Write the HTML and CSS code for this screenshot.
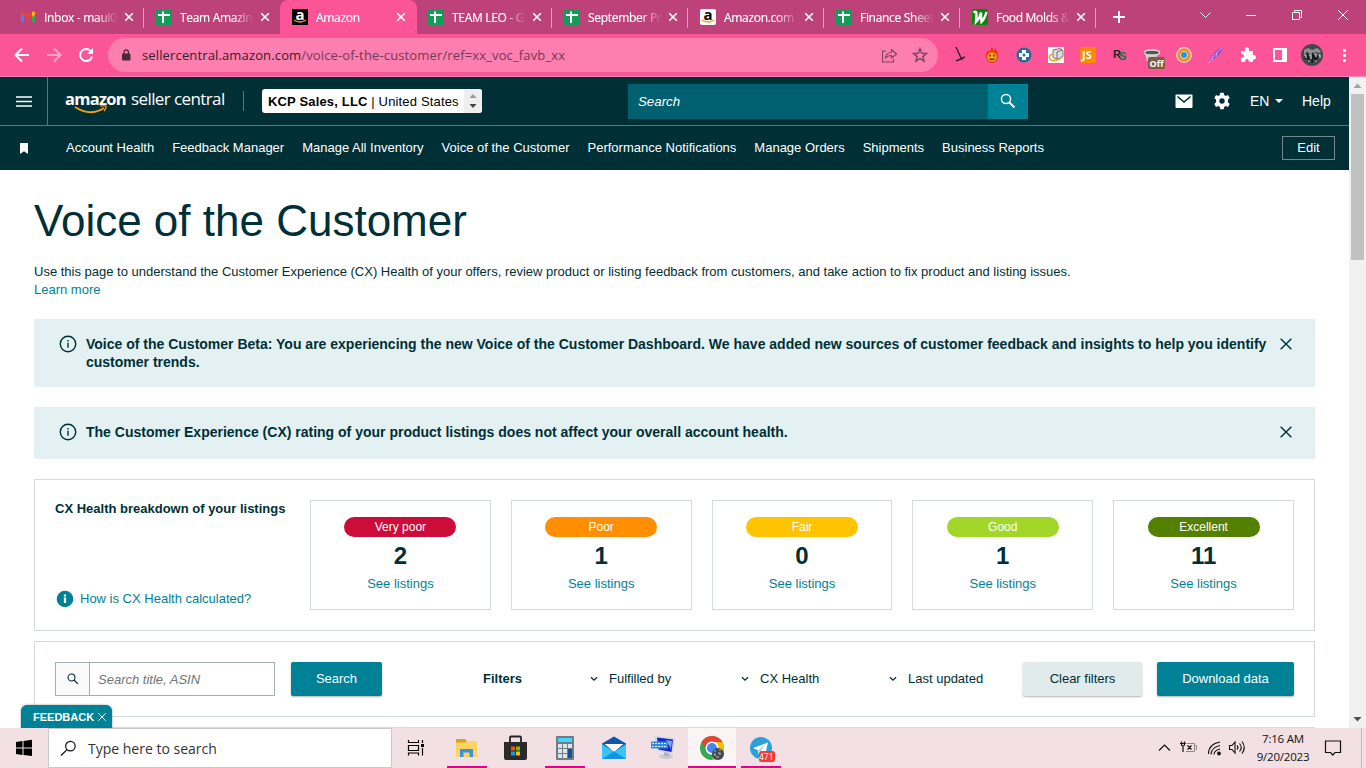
FILE: index.html
```
<!DOCTYPE html>
<html lang="en">
<head>
    <meta charset="UTF-8">
    <meta name="viewport" content="width=device-width, initial-scale=1.0">
    <title>Amazon</title>
    <link rel="stylesheet" href="styles.css">
</head>
<body>
    <svg class="defs" width="0" height="0">
        <symbol id="close" viewBox="0 0 10 10"><path d="M1.2 1.2l7.6 7.6M8.8 1.2L1.2 8.8" stroke="currentColor" fill="none"/></symbol>
        <symbol id="sheet" viewBox="0 0 16 16"><rect width="16" height="16" rx="1.5" fill="#0f9d58"/><path d="M2 6h12M7 2.500V14" stroke="#fff" stroke-width="2" fill="none"/></symbol>
        <symbol id="info" viewBox="0 0 18 18"><circle cx="9" cy="9" r="7.7" stroke="#002f36" stroke-width="1.4" fill="none"/><path d="M9 7.7v5M9 4.9v1.6" stroke="#002f36" stroke-width="1.4"/></symbol>
        <symbol id="chev" viewBox="0 0 8 6"><path d="M1 1.2l3 3 3-3" stroke="#002f36" stroke-width="1.3" fill="none"/></symbol>
        <symbol id="glass" viewBox="0 0 16 16"><circle cx="6" cy="6" r="4.6" stroke="currentColor" stroke-width="1.5" fill="none"/><path d="M9.5 9.5l5 5" stroke="currentColor" stroke-width="1.8"/></symbol>
    </svg>

    <!-- Browser tabs -->
    <div class="tabs">
        <div class="tab line">
            <svg class="fav" viewBox="0 0 16 16"><path d="M1 4v9.2h3V7z" fill="#4285f4"/><path d="M12 7v6.2h3V4z" fill="#34a853"/><path d="M1 4.2C1 2.4 3 2 4 3l4 3.2L12 3c1-1 3-.6 3 1.2L8 10z" fill="#ea4335"/><path d="M12 3c1-1 3-.6 3 1.2v1.6L12 8z" fill="#fbbc04"/></svg>
            <span class="tab-title">Inbox - maui01</span><svg class="tab-x"><use href="#close"/></svg>
        </div>
        <div class="tab"><svg class="fav"><use href="#sheet"/></svg><span class="tab-title">Team Amazing</span><svg class="tab-x"><use href="#close"/></svg></div>
        <div class="tab active"><span class="fav amz dark">a<svg viewBox="0 0 16 5"><path d="M2 1q6 4 12 0" stroke="#f90" stroke-width="1.3" fill="none"/></svg></span><span class="tab-title">Amazon</span><svg class="tab-x"><use href="#close"/></svg></div>
        <div class="tab line"><svg class="fav"><use href="#sheet"/></svg><span class="tab-title">TEAM LEO - G</span><svg class="tab-x"><use href="#close"/></svg></div>
        <div class="tab line"><svg class="fav"><use href="#sheet"/></svg><span class="tab-title">September Pr</span><svg class="tab-x"><use href="#close"/></svg></div>
        <div class="tab line"><span class="fav amz">a<svg viewBox="0 0 16 5"><path d="M2 1q6 4 12 0" stroke="#f90" stroke-width="1.5" fill="none"/></svg></span><span class="tab-title">Amazon.com</span><svg class="tab-x"><use href="#close"/></svg></div>
        <div class="tab line"><svg class="fav"><use href="#sheet"/></svg><span class="tab-title">Finance Sheet</span><svg class="tab-x"><use href="#close"/></svg></div>
        <div class="tab line"><svg class="fav" viewBox="0 0 16 16"><rect width="16" height="16" rx="2" fill="#0a870a"/><path d="M1.500 3.500q3-2 3 1.500 0 4-.5 8Q8 9 9 3.500q0 5 .5 9.500 3-3 5-10" stroke="#fff" stroke-width="2.400" fill="none"/></svg><span class="tab-title">Food Molds &amp;</span><svg class="tab-x"><use href="#close"/></svg></div>
        <svg class="plus" viewBox="0 0 12 12"><path d="M6 0v12M0 6h12" stroke="#fff" stroke-width="2"/></svg>
        <div class="win">
            <svg viewBox="0 0 46 28"><path d="M18.500 11.500l5 5 5-5" stroke="#fff" fill="none"/></svg>
            <svg viewBox="0 0 46 28"><path d="M18 14.500h10" stroke="#fff" fill="none"/></svg>
            <svg viewBox="0 0 46 28"><path d="M18.500 11.500h7v7h-7zM20.500 11.500v-2h7v7h-2" stroke="#fff" fill="none"/></svg>
            <svg viewBox="0 0 46 28"><path d="M18 9l10 10M28 9L18 19" stroke="#fff" fill="none"/></svg>
        </div>
    </div>

    <!-- Address bar -->
    <div class="toolbar">
        <svg class="navs" viewBox="0 0 108 42" fill="none" stroke-width="2">
            <path d="M29 21H16M22 14.500L15.500 21l6.500 6.500" stroke="#fff"/>
            <path d="M47 21h13M54 14.500l6.500 6.500-6.500 6.500" stroke="#fda3c6"/>
            <path d="M91 17.500A6 6 0 1 0 92 22.500" stroke="#fff"/><path d="M93 14v6h-6z" fill="#fff"/>
        </svg>
        <div class="omnibox">
            <svg class="lock" viewBox="0 0 10 12"><rect x="1" y="4.500" width="8.500" height="7" rx="1" fill="#4b2a39"/><path d="M3 5V3a2.200 2.200 0 0 1 4.400 0v2" stroke="#4b2a39" stroke-width="1.3" fill="none"/></svg>
            <span class="url">sellercentral.amazon.com<em>/voice-of-the-customer/ref=xx_voc_favb_xx</em></span>
            <svg class="omni-icons" viewBox="0 0 48 18" fill="none" stroke="#7e4560" stroke-width="1.2">
                <path d="M4 5H.5v11h11v-3M3.500 12c.5-4 3-5.500 6-5.500V3.500l5 4.500-5 4V9.500c-2.500 0-4.500.5-6 2.500z" stroke-linejoin="round"/>
                <path d="M38 2.800l1.800 4.400 4.700.3-3.600 3.100 1.200 4.600-4.100-2.600-4.100 2.600 1.200-4.600-3.600-3.100 4.700-.3z" stroke-width="1.500"/>
            </svg>
        </div>
        <div class="exts">
            <svg viewBox="0 0 32 32"><path d="M12 8l6 13M12 22l9-4" stroke="#33212b" stroke-width="1.400"/></svg>
            <svg viewBox="0 0 32 32"><path d="M16 8c1 2 1 3 2 4 1-1 0-2 1-3 1 2 3 4 3 8 0 4-3 7-6 7s-6-3-6-7c0-3 2-4 2-6l2 2c1-2 0-3 2-5z" fill="#e8370d"/><circle cx="16" cy="18" r="4.800" fill="#f9a11b"/><path d="M13.500 19.500q2.500 2.500 5 0M14 15.500v2M18 15.500v2" stroke="#5a2106" stroke-width="1.200" fill="none"/></svg>
            <svg viewBox="0 0 32 32"><circle cx="16" cy="16" r="7.500" fill="#276b9c"/><path d="M16 11v10M11 16h10" stroke="#fff" stroke-width="4"/><circle cx="16" cy="16" r="1.500" fill="#276b9c"/></svg>
            <svg viewBox="0 0 32 32"><rect x="8" y="8" width="16" height="16" fill="#fff"/><path d="M13 11l7-1.500 3 2v6l-6 3-4-2z" fill="#ddd" stroke="#555" stroke-width=".8"/><path d="M17 20v-7l5-2" stroke="#555" stroke-width=".8" fill="none"/><path d="M12 15q-5 3-1 6 6 2 11-3" stroke="#f6a020" stroke-width="1.500" fill="none"/></svg>
            <svg viewBox="0 0 32 32"><rect x="8" y="8" width="16" height="16" rx="1.500" fill="#ff8a00"/><text x="10" y="20" class="i-js">JS</text></svg>
            <svg viewBox="0 0 32 32"><text x="9" y="19" class="i-rs">R</text><text x="15" y="21" class="i-rs g">S</text></svg>
            <svg viewBox="0 0 32 32"><path d="M9 14l2 8h9l2-8z" fill="#ccc"/><ellipse cx="16" cy="13.500" rx="7.500" ry="2.500" fill="#555" stroke="#ddd" stroke-width="1.300"/><rect x="12" y="18" width="17" height="12" rx="2" fill="#7d5c43"/><text x="13.500" y="28" class="i-off">Off</text></svg>
            <svg viewBox="0 0 32 32"><circle cx="16" cy="16" r="7.300" fill="#ef8d29" stroke="#ead9c8" stroke-width="1.300"/><circle cx="16" cy="16" r="3.600" fill="#219bd8" stroke="#f6d7b8"/></svg>
            <svg viewBox="0 0 32 32"><path d="M9 24C10 17 16 11 23 8c-1 5-5 10-13 14z" fill="#8551cf"/><path d="M9 24C12 18 16 14 22 9M13 17l-1 4M17 13l-1 5" stroke="#db9aee" fill="none"/></svg>
            <svg viewBox="0 0 32 32"><path d="M9 12h4c-1-5 5-5 4 0h4v4c4-1 4 5 0 4.500V23h-4c0-4-4-4-4 0H9v-4c4 0 4-4 0-4z" fill="#fff"/></svg>
            <svg viewBox="0 0 32 32"><path d="M10 10h12v12H10z" stroke="#fff" stroke-width="2" fill="none"/><path d="M18 10h5v12h-5z" fill="#fff"/></svg>
            <svg viewBox="0 0 32 32"><circle cx="16" cy="16" r="11" fill="#45484b"/><path d="M8 11l4-2 4 2 5-2 4 3-1 2-5-1-3 2-4-1-4 1z" fill="#8b9192"/><path d="M9 20l2-5 2 7M16 24l1-8 3 5 2-5" stroke="#14171b" stroke-width="2" fill="none"/><path d="M8 16h2v3M13 16h2v4M18 15h2v3M22 16h2v3M12 22h2M19 22h2" stroke="#ccc" stroke-width="1.200" fill="none"/></svg>
            <svg viewBox="0 0 32 32" fill="#fff"><rect x="15" y="10" width="3" height="3" rx="1"/><rect x="15" y="15" width="3" height="3" rx="1"/><rect x="15" y="20" width="3" height="3" rx="1"/></svg>
        </div>
    </div>

    <div class="viewport">
        <div class="page">
            <header class="header">
                <div class="burger"><svg width="16" height="11" viewBox="0 0 16 11"><path d="M0 1h16M0 5.500h16M0 10h16" stroke="#fff" stroke-width="1.700"/></svg></div>
                <div class="logo"><b>amazon</b><span>seller central</span><svg class="smile" viewBox="0 0 36 9"><path d="M1 2q15 10 29 1" stroke="#f8991d" stroke-width="1.800" fill="none"/><path d="M26 1.200q5-1 6 0 .5 1.500-2 5" stroke="#f8991d" stroke-width="1.300" fill="none"/></svg></div>
                <div class="account"><span><b>KCP Sales, LLC</b> | United States</span><svg viewBox="0 0 18 24"><rect width="18" height="24" fill="#efefef"/><path d="M5.500 9l3.500-4 3.500 4z" fill="#999"/><path d="M5.500 15l3.500 4 3.500-4z" fill="#444"/></svg></div>
                <div class="search"><span>Search</span><div class="search-go"><svg width="16" height="16"><use href="#glass"/></svg></div></div>
                <svg class="mail" viewBox="0 0 18 14"><rect x=".5" y=".5" width="17" height="13.500" rx="1" fill="#fff"/><path d="M2.500 2.500L9 8l6.500-5.500" stroke="#002f36" stroke-width="1.600" fill="none"/></svg>
                <svg class="gear" viewBox="0 0 18 18"><path d="M7.300.7h3.400l.5 2.300 1.500.9 2.300-.8 1.700 2.900-1.800 1.700v2.600l1.800 1.700-1.700 2.900-2.300-.8-1.500.9-.5 2.300H7.300L6.800 15l-1.500-.9-2.300.8L1.300 12l1.800-1.700V7.700L1.300 6 3 3.100l2.300.8L6.800 3z" fill="#fff"/><circle cx="9" cy="9" r="2.700" fill="#002f36"/></svg>
                <span class="lang">EN</span><svg class="caret" viewBox="0 0 8 4"><path d="M0 0h8L4 4z" fill="#fff"/></svg>
                <span class="help">Help</span>
            </header>
            <nav class="nav">
                <svg class="bookmark" viewBox="0 0 8 11"><path d="M0 0h8v11L4 8.300 0 11z" fill="#fff"/></svg>
                <a>Account Health</a><a>Feedback Manager</a><a>Manage All Inventory</a><a>Voice of the Customer</a><a>Performance Notifications</a><a>Manage Orders</a><a>Shipments</a><a>Business Reports</a>
                <button class="edit">Edit</button>
            </nav>

            <main class="content">
                <h1>Voice of the Customer</h1>
                <p class="intro">Use this page to understand the Customer Experience (CX) Health of your offers, review product or listing feedback from customers, and take action to fix product and listing issues.<br><a>Learn more</a></p>

                <div class="alert beta">
                    <svg class="info"><use href="#info"/></svg>
                    <p>Voice of the Customer Beta: You are experiencing the new Voice of the Customer Dashboard. We have added new sources of customer feedback and insights to help you identify<br>customer trends.</p>
                    <svg class="dismiss"><use href="#close"/></svg>
                </div>
                <div class="alert">
                    <svg class="info"><use href="#info"/></svg>
                    <p>The Customer Experience (CX) rating of your product listings does not affect your overall account health.</p>
                    <svg class="dismiss"><use href="#close"/></svg>
                </div>

                <section class="panel health">
                    <div class="health-info">
                        <b>CX Health breakdown of your listings</b>
                        <a><svg viewBox="0 0 18 18"><circle cx="9" cy="9" r="8.300" fill="#008296"/><path d="M9 7.500V13M9 4.500v2" stroke="#fff" stroke-width="2.200"/></svg>How is CX Health calculated?</a>
                    </div>
                    <div class="cards">
                        <div class="card"><span class="pill very-poor">Very poor</span><strong>2</strong><a>See listings</a></div>
                        <div class="card"><span class="pill poor">Poor</span><strong>1</strong><a>See listings</a></div>
                        <div class="card"><span class="pill fair">Fair</span><strong>0</strong><a>See listings</a></div>
                        <div class="card"><span class="pill good">Good</span><strong>1</strong><a>See listings</a></div>
                        <div class="card"><span class="pill excellent">Excellent</span><strong>11</strong><a>See listings</a></div>
                    </div>
                </section>

                <section class="panel filters">
                    <div class="find"><span class="find-icon"><svg width="12" height="12"><use href="#glass"/></svg></span><span class="find-text">Search title, ASIN</span></div>
                    <button class="btn find-btn">Search</button>
                    <b class="filters-label">Filters</b>
                    <span class="filter f1"><svg><use href="#chev"/></svg>Fulfilled by</span>
                    <span class="filter f2"><svg><use href="#chev"/></svg>CX Health</span>
                    <span class="filter f3"><svg><use href="#chev"/></svg>Last updated</span>
                    <button class="btn clear">Clear filters</button>
                    <button class="btn download">Download data</button>
                </section>
                <section class="panel results"></section>
            </main>
            <div class="feedback">FEEDBACK<svg><use href="#close"/></svg></div>
        </div>
        <div class="scrollbar">
            <svg viewBox="0 0 17 17"><path d="M4.500 11l4-4.500 4 4.500z" fill="#a3a3a3"/></svg>
            <div class="thumb"></div>
            <svg viewBox="0 0 17 17"><path d="M4.500 6l4 4.500 4-4.500z" fill="#505050"/></svg>
        </div>
    </div>

    <!-- Windows taskbar -->
    <div class="taskbar">
        <svg class="start" viewBox="0 0 48 40"><path d="M16 14l6.500-1v6.500H16zM23.500 12.900L32 11.800v7.700h-8.500zM16 20.500h6.500V27L16 26zM23.500 20.500H32V28l-8.500-1.100z"/></svg>
        <div class="type"><svg viewBox="0 0 18 18"><circle cx="11" cy="6.500" r="5" stroke="#111" stroke-width="1.300" fill="none"/><path d="M7.500 10.200L1 16.500" stroke="#111" stroke-width="1.400"/></svg>Type here to search</div>
        <svg class="task" viewBox="0 0 48 40"><path d="M16.500 12v2.500h10V12M16.500 27.500V25h10v2.500M16.500 17.500h10v5h-10zM30.500 12v3M30.500 20v7.500" stroke="#000" stroke-width="1.200" fill="none"/><rect x="29" y="16" width="3" height="3"/></svg>
        <div class="apps">
            <svg class="open" viewBox="0 0 48 40"><path d="M13 11h9l1.500 2H34v16H13z" fill="#fcd462"/><path d="M13 11h9l1.500 2-1 1.500H13z" fill="#dda017"/><path d="M17 29v-8h13v8h-3.500v-4.500h-6V29z" fill="#3c93dd"/></svg>
            <svg viewBox="0 0 48 40"><path d="M18 15V9.500q0-1 1-1h9q1 0 1 1V15" stroke="#222" stroke-width="1.800" fill="none"/><path d="M12 14h23v16q0 2-2 2H14q-2 0-2-2z" fill="#2a2a2a"/><path d="M19 18.500h4v4h-4z" fill="#f25022"/><path d="M24 18.500h4v4h-4z" fill="#7fba00"/><path d="M19 23.500h4v4h-4z" fill="#00a4ef"/><path d="M24 23.500h4v4h-4z" fill="#ffb900"/></svg>
            <svg class="open" viewBox="0 0 48 40"><rect x="15" y="8" width="18" height="24" rx="1" fill="#6f7d8b"/><path d="M17 10h14v4H17z" fill="#45d6ff"/><path d="M17 16h4v4h-4zM22 16h4v4h-4zM27 16h4v4h-4zM17 21h4v4h-4zM22 21h4v4h-4zM17 26h4v4h-4zM22 26h4v4h-4z" fill="#dfe4e9"/><path d="M27 21h4v9h-4z" fill="#134f95"/></svg>
            <svg viewBox="0 0 48 40"><path d="M12 15.500L24 8.500l12 7v15H12z" fill="#0f58a8"/><path d="M14.500 16h19L24 24z" fill="#fff"/><path d="M12 16l12 8 12-8v15H12z" fill="#38c4f4"/><path d="M24 23.500L36 31H12z" fill="#1593df"/></svg>
            <svg viewBox="0 0 48 40"><ellipse cx="27" cy="28.500" rx="7" ry="2.500" fill="#c9cbd2"/><path d="M25 22h5v6h-5z" fill="#aeb1bb"/><path d="M15 8l21 2-2 16-16-3z" fill="#d4d6df"/><path d="M18 9.500l16 2-1.500 12.500-13-2.500z" fill="#1529c8"/><path d="M27 12l6 1-1 8z" fill="#7fa0f2"/><path d="M12 13.500h17v7H12z" fill="#388ad8"/><path d="M13 15.500h15M13 18.500h15" stroke="#d8efff" stroke-dasharray="2 1"/></svg>
            <svg class="open current" viewBox="0 0 48 40"><circle cx="24" cy="20" r="12" fill="#34a853"/><path d="M13.600 14a12 12 0 0 1 20.800 0H24l-5 9z" fill="#ea4335"/><path d="M34.400 14A12 12 0 0 1 24 32l5-9-5-9z" fill="#fbbc04"/><circle cx="24" cy="20" r="5.800" fill="#4285f4" stroke="#fff" stroke-width="1.500"/><circle cx="30" cy="26" r="6" fill="#44484d"/><path d="M26 23h2M31 22h2M26 26h1v2M30 25h2v2M28 29h3" stroke="#bbb" stroke-width="1.200" fill="none"/></svg>
            <svg class="open" viewBox="0 0 48 40"><circle cx="24" cy="20" r="11" fill="#2ba0da"/><path d="M16 20l15-5.500-3 13-4.500-3.300-2 2-.7-4z" fill="#fff"/><path d="M21 22l7-5-5 7z" fill="#a9cfe8"/><rect x="22" y="23" width="16" height="11" rx="2.500" fill="#f23c34"/><text x="22" y="32" class="i-badge">471</text></svg>
        </div>
        <svg class="tray" viewBox="0 0 94 40" fill="none" stroke="#111" stroke-width="1.200">
            <path d="M2 22.500l5.500-5.500 5.500 5.500"/>
            <path d="M30 15.500h7.500v8H29M38.500 17.500h1v4h-1" stroke="#888" stroke-width="1"/><path d="M24.500 13.500v3.500q1.500 2 3 0v-3.500M23 15.500h6M26 18v6M30.500 17.500l4 4M34.500 17.500l-4 4"/>
            <path d="M51.500 26q0-10 11.500-12M54 26.500q0-7 9-9M57 26.500q0-4 6-5.500" stroke-width="1.100"/><circle cx="62" cy="25.500" r="1.300" fill="#111"/>
            <path d="M72.500 17.500H75l3-3.500v11l-3-3.500h-2.500zM80 17.500q2 2 0 4M82.500 15.500q3.500 4 0 8M85 13.500q4.500 6 0 12" stroke-width="1.100"/>
        </svg>
        <div class="clock"><span>7:16 AM</span><span>9/20/2023</span></div>
        <svg class="note" viewBox="0 0 18 18"><path d="M1.500 2h15v11.500H11L8.800 16l-2.300-2.500h-5z" stroke="#111" stroke-width="1.200" fill="none"/></svg>
        <i class="peek"></i>
    </div>
</body>
</html>
```
FILE: styles.css
```
* {
    box-sizing: border-box;
}
body {
    margin: 0;
    width: 1366px;
    height: 768px;
    overflow: hidden;
    display: flex;
    flex-direction: column;
    font-family: "Liberation Sans", Arial, sans-serif;
    font-size: 13px;
    color: #002f36;
    background: #fff;
}
svg {
    display: block;
    flex: none;
}
.defs {
    position: absolute;
}
button {
    font-family: inherit;
    padding: 0;
}
h1, p {
    margin: 0;
}

/* browser */
.tabs, .toolbar, .taskbar {
    font-family: "Open Sans", "Noto Sans", sans-serif;
    display: flex;
    align-items: center;
    flex: none;
}
.tabs {
    height: 34px;
    background: #bc4279;
    padding-left: 8px;
}
.tab {
    width: 136px;
    height: 34px;
    flex: none;
    display: flex;
    align-items: center;
    padding-left: 12px;
    color: #fff;
    font-size: 12px;
    background: linear-gradient(#e2a2bf, #e2a2bf) right 8px / 1px 20px no-repeat;
}
.tab:not(.line) {
    background: none;
}
.tab.active {
    width: 137px;
    margin-right: -1px;
    background: #fb5597;
    border-radius: 8px 8px 0 0;
}
.fav {
    width: 16px;
    height: 16px;
    flex: none;
}
.amz {
    background: #fff;
    border-radius: 2px;
    color: #000;
    font-weight: bold;
    font-size: 15px;
    line-height: 10px;
    text-align: center;
}
.amz.dark {
    background: #000;
    border-radius: 0;
    color: #fff;
}
.tab-title {
    width: 78px;
    margin-left: 8px;
    overflow: hidden;
    white-space: nowrap;
    letter-spacing: -0.3px;
    -webkit-text-stroke: 0.15px #fff;
    -webkit-mask-image: linear-gradient(to right, #000 52px, transparent 74px);
    mask-image: linear-gradient(to right, #000 52px, transparent 74px);
}
.tab-x {
    width: 10px;
    height: 10px;
    margin-left: 2px;
    stroke-width: 1.6;
}
.plus {
    width: 12px;
    height: 12px;
    margin-left: 17px;
}
.win {
    display: flex;
    margin-left: auto;
}
.win svg {
    width: 46px;
    height: 28px;
    margin-top: -5px;
}
.toolbar {
    height: 43px;
    background: #fb5597;
    border-bottom: 1px solid #fd8bb8;
}
.navs {
    width: 108px;
    height: 42px;
}
.omnibox {
    width: 830px;
    height: 34px;
    border-radius: 17px;
    background: #fd7fb0;
    display: flex;
    align-items: center;
    padding: 0 8px 0 13px;
}
.lock {
    width: 10px;
    height: 12px;
}
.url {
    margin-left: 11px;
    font-size: 13px;
    letter-spacing: 0.14px;
    color: #33202a;
    white-space: nowrap;
}
.url em {
    font-style: normal;
    color: #713b55;
}
.omni-icons {
    width: 48px;
    height: 18px;
    margin-left: auto;
}
.exts {
    display: flex;
    margin-left: 6px;
}
.exts svg {
    width: 32px;
    height: 32px;
}
.i-js {
    font: bold 11px "Open Sans", sans-serif;
    fill: #fff;
}
.i-rs {
    font: bold 11px "Liberation Sans", sans-serif;
    fill: #222;
}
.i-rs.g {
    fill: #087443;
}
.i-off {
    font: bold 9px "Open Sans", sans-serif;
    fill: #fff;
}

/* page */
.viewport {
    height: 651px;
    display: flex;
    flex: none;
}
.page {
    width: 1349px;
    height: 651px;
    position: relative;
    overflow: hidden;
}
.header {
    height: 49px;
    background: #002f36;
    border-bottom: 1px solid #5b7579;
    display: flex;
    align-items: center;
    color: #fff;
    font-size: 14px;
}
.burger {
    width: 48px;
    height: 48px;
    border-right: 1px solid #5b7579;
    display: flex;
    align-items: center;
    justify-content: center;
}
.logo {
    width: 178px;
    height: 20px;
    margin: 0 18px;
    border-right: 1px solid #5b7579;
    position: relative;
    display: flex;
    align-items: center;
    font: 17px/20px "Open Sans", sans-serif;
    white-space: nowrap;
}
.logo b {
    width: 65px;
    font-size: 16.5px;
    letter-spacing: -0.75px;
    margin: -5px 0 0 -1px;
}
.logo span {
    margin: -5px 0 0 1px;
    letter-spacing: -0.6px;
}
.smile {
    position: absolute;
    left: 8px;
    top: 14px;
    width: 36px;
    height: 9px;
}
.account {
    width: 220px;
    height: 24px;
    border-radius: 3px;
    overflow: hidden;
    background: #fff;
    color: #000;
    display: flex;
    align-items: center;
    justify-content: space-between;
    padding-left: 6px;
    font-size: 13px;
    letter-spacing: 0.16px;
    white-space: nowrap;
}
.account svg {
    width: 18px;
    height: 24px;
}
.search {
    width: 400px;
    height: 35px;
    margin-left: 146px;
    background: #00606f;
    display: flex;
    align-items: center;
    justify-content: space-between;
    padding-left: 10px;
    font-size: 13.3px;
    font-style: italic;
}
.search-go {
    width: 40px;
    height: 35px;
    background: #008296;
    display: flex;
    align-items: center;
    justify-content: center;
}
.mail {
    width: 18px;
    height: 14px;
    margin-left: 147px;
}
.gear {
    width: 18px;
    height: 18px;
    margin-left: 20px;
}
.lang {
    margin-left: 19px;
    width: 25px;
}
.caret {
    width: 8px;
    height: 4px;
}
.help {
    margin-left: 19px;
}
.nav {
    height: 44px;
    background: #002f36;
    display: flex;
    align-items: center;
    gap: 18px;
    padding: 0 14px 0 20px;
    color: #fff;
    white-space: nowrap;
}
.bookmark {
    width: 8px;
    height: 11px;
    margin-right: 20px;
}
.edit {
    width: 53px;
    height: 24px;
    margin-left: auto;
    padding-bottom: 1px;
    background: none;
    border: 1px solid #74888c;
    color: #fff;
    font-size: 13px;
}
.content {
    padding: 25px 34px 0;
}
h1 {
    font-size: 44px;
    line-height: 52px;
    font-weight: normal;
}
.intro {
    margin-top: 16px;
    line-height: 18px;
    white-space: nowrap;
}
a {
    color: #008296;
}
.nav a {
    color: #fff;
    padding-bottom: 2px;
}
.alert {
    height: 52px;
    margin-bottom: 20px;
    padding: 16px 22px 0 25px;
    background: #e3f1f3;
    display: flex;
    font-size: 14px;
    line-height: 18px;
    font-weight: bold;
    white-space: nowrap;
}
.alert.beta {
    height: 68px;
    margin-top: 20px;
}
.info {
    width: 18px;
    height: 18px;
    margin-right: 9px;
}
.dismiss {
    width: 14px;
    height: 14px;
    margin: 2px 0 0 auto;
}
.panel {
    border: 1px solid #d5dbdb;
    display: flex;
}
.health {
    height: 152px;
    padding: 20px;
}
.health-info {
    width: 255px;
    flex: none;
    display: flex;
    flex-direction: column;
    justify-content: space-between;
    line-height: 18px;
}
.health-info a {
    display: flex;
    align-items: center;
    gap: 6px;
    padding-left: 1px;
    margin-bottom: 2px;
}
.health-info svg {
    width: 18px;
    height: 18px;
}
.cards {
    flex: 1;
    display: grid;
    grid-template-columns: repeat(5, 1fr);
    gap: 20px;
}
.card {
    height: 110px;
    border: 1px solid #d5dbdb;
    padding-top: 16px;
    display: flex;
    flex-direction: column;
    align-items: center;
}
.pill {
    width: 112px;
    height: 20px;
    border-radius: 10px;
    color: #fff;
    font-size: 12px;
    line-height: 20px;
    text-align: center;
}
.very-poor { background: #cc0c39; }
.poor { background: #ff8f00; }
.fair { background: #ffc400; }
.good { background: #a2d729; }
.excellent { background: #538000; }
.card strong {
    font-size: 24px;
    line-height: 28px;
    margin: 5px 0;
}
.card a {
    line-height: 18px;
}
.filters {
    height: 76px;
    margin-top: 10px;
    padding: 0 20px;
    align-items: center;
    white-space: nowrap;
}
.find {
    width: 220px;
    height: 34px;
    border: 1px solid #a2b0b3;
    display: flex;
    align-items: center;
}
.find-icon {
    width: 34px;
    height: 32px;
    background: #fafafa;
    border-right: 1px solid #a2b0b3;
    display: flex;
    align-items: center;
    justify-content: center;
}
.find-text {
    margin-left: 8px;
    color: #6c7778;
    font-style: italic;
}
.btn {
    height: 34px;
    border: 0;
    border-radius: 2px;
    padding-bottom: 2px;
    background: #008296;
    color: #fff;
    font-size: 13px;
    box-shadow: 0 1px 2px rgba(0,0,0,0.3);
}
.find-btn {
    width: 91px;
    margin-left: 16px;
}
.filters-label {
    width: 107px;
    margin-left: 101px;
    padding-bottom: 2px;
}
.filter {
    display: flex;
    align-items: center;
    gap: 11px;
    padding-bottom: 2px;
}
.filter svg {
    width: 8px;
    height: 6px;
    margin-top: 2px;
}
.f1 { width: 151px; }
.f2 { width: 148px; }
.f3 { width: 134px; }
.clear {
    width: 119px;
    background: #e1ebec;
    color: #002f36;
}
.download {
    width: 137px;
    margin-left: 15px;
}
.results {
    height: 40px;
    margin-top: 10px;
}
.feedback {
    position: absolute;
    left: 21px;
    bottom: 0;
    width: 91px;
    height: 23px;
    background: #008296;
    border-radius: 6px 6px 0 0;
    box-shadow: 0 0 2px rgba(0,0,0,0.5);
    color: #fff;
    font-size: 11px;
    font-weight: bold;
    display: flex;
    align-items: center;
    gap: 3px;
    padding-left: 12px;
}
.feedback svg {
    width: 10px;
    height: 10px;
}
.scrollbar {
    width: 17px;
    background: #f1f1f1;
    display: flex;
    flex-direction: column;
}
.scrollbar svg {
    width: 17px;
    height: 17px;
}
.thumb {
    width: 13px;
    height: 166px;
    margin: 0 2px auto;
    background: #c1c1c1;
}

/* taskbar */
.taskbar {
    height: 40px;
    background: #f2e0e5;
    color: #111;
}
.start, .task {
    width: 48px;
    height: 40px;
}
.type {
    width: 344px;
    height: 40px;
    background: #fff;
    border: 1px solid #c9c9c9;
    display: flex;
    align-items: center;
    gap: 11px;
    padding-left: 11px;
    font-size: 14px;
    color: #333;
}
.type svg {
    width: 17px;
    height: 17px;
}
.apps {
    display: flex;
    gap: 1px;
    margin-left: 3px;
}
.apps svg {
    width: 48px;
    height: 40px;
    background: linear-gradient(#e3008c, #e3008c) center bottom / 0 2px no-repeat;
}
.apps .open {
    background-size: 40px 2px;
}
.apps .current {
    background-size: 48px 2px;
    background-color: #fbf4f5;
}
.i-badge {
    font: 8.5px "Open Sans", sans-serif;
    fill: #fff;
}
.tray {
    width: 94px;
    height: 40px;
    margin-left: auto;
}
.clock {
    width: 64px;
    display: flex;
    flex-direction: column;
    align-items: center;
    font-size: 11.5px;
    letter-spacing: -0.2px;
    line-height: 18px;
}
.note {
    width: 18px;
    height: 18px;
    margin: 0 19px 0 9px;
}
.peek {
    width: 1px;
    height: 40px;
    background: #c9b5bb;
    margin-right: 4px;
}
```
